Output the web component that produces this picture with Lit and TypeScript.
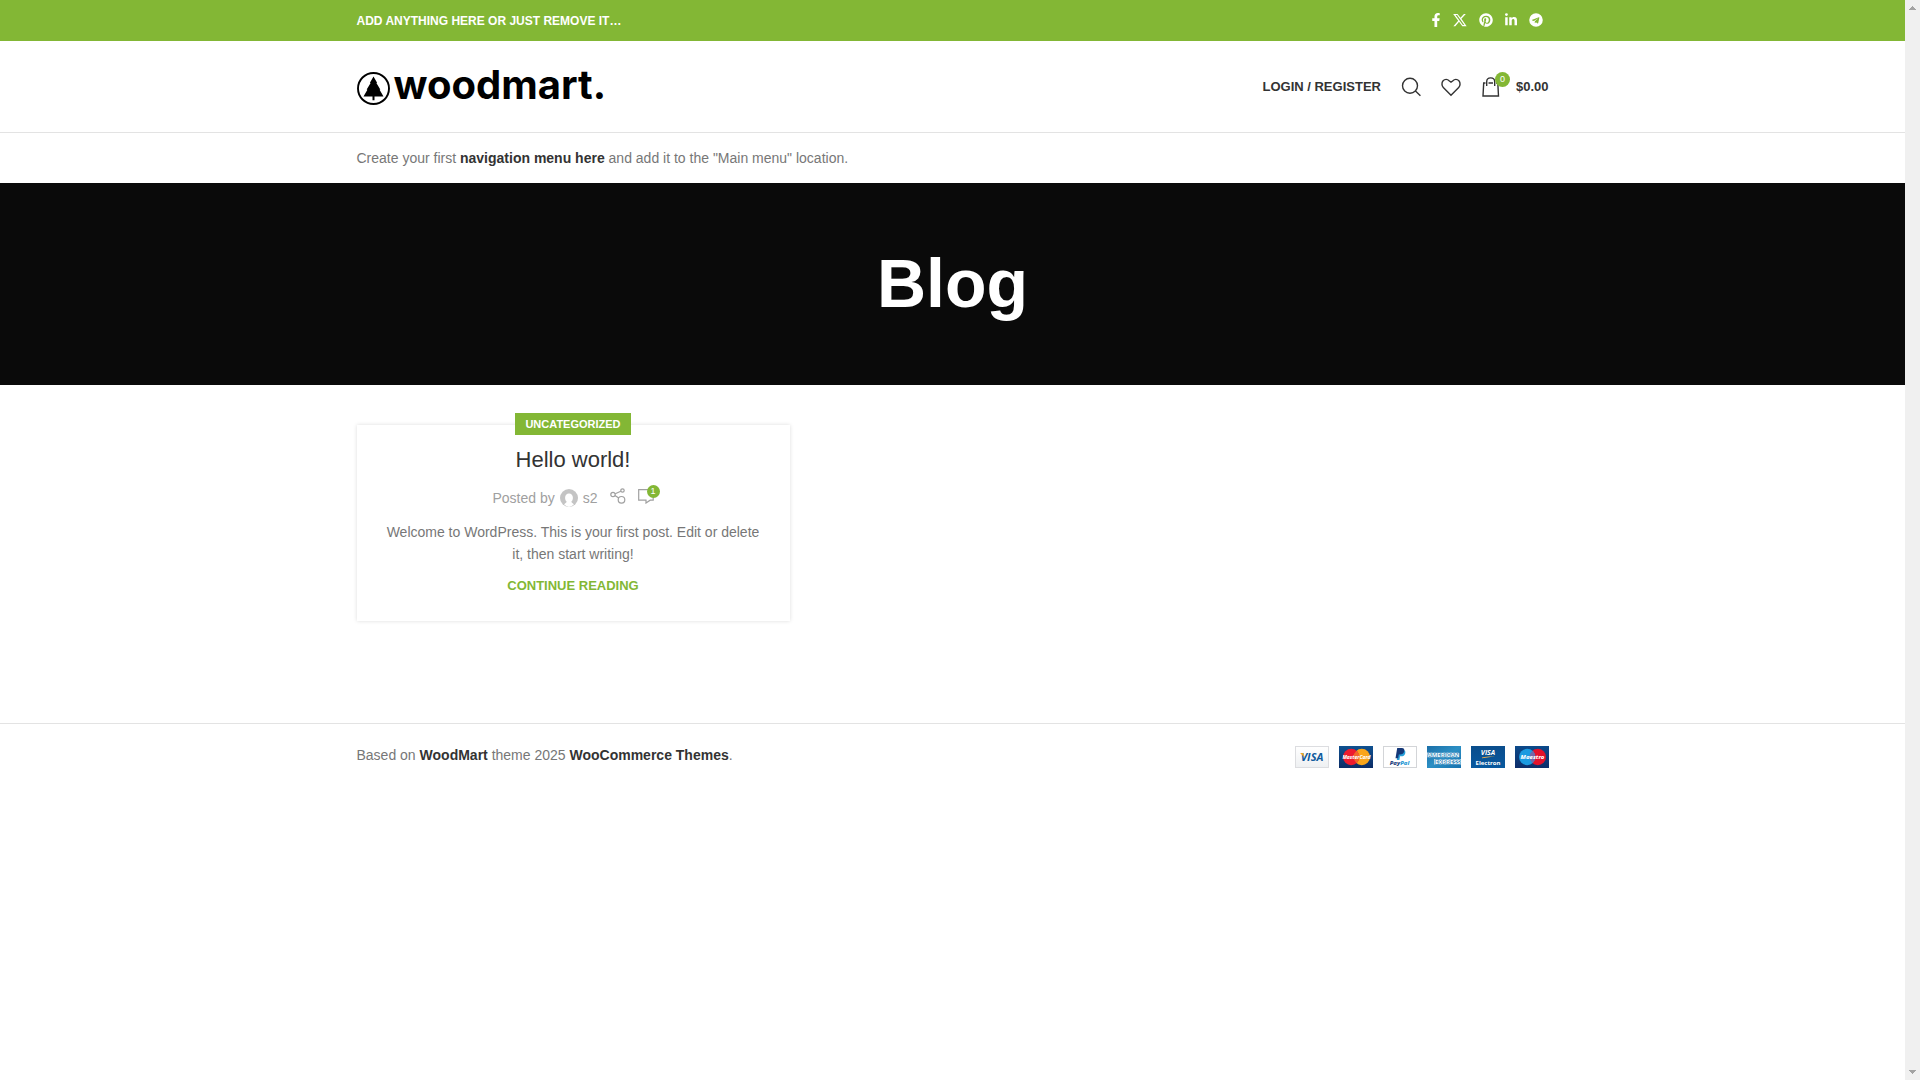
import { LitElement, html, svg, css } from "lit";
import { customElement } from "lit/decorators.js";

const icons = {
  facebook: svg`<svg width="10" height="14" viewBox="0 0 320 512" aria-hidden="true"><path d="M279 288l14-93h-89v-60c0-25 12-50 52-50h41V7s-37-7-72-7c-73 0-121 44-121 125v70H23v93h81v224h100V288z"/></svg>`,
  x: svg`<svg width="14" height="14" viewBox="0 0 24 24" aria-hidden="true"><path d="M.3 1.500h7.600l4.900 6.500 5.900-6.500h3.300l-7.600 8.500 9 12.500h-7.500l-5.500-7.300-6.400 7.300H.6l8.300-9.300zM4.300 3.400l12.500 17.200h2.600L7 3.400z"/></svg>`,
  pinterest: svg`<svg width="14" height="14" viewBox="0 0 496 512" aria-hidden="true"><path d="M496 256c0 137-111 248-248 248-25.600 0-50.200-3.900-73.400-11.100 10.100-16.500 25.200-43.500 30.800-65 3-11.600 15.400-59 15.400-59 8.100 15.400 31.700 28.500 56.800 28.500 74.800 0 128.700-68.800 128.700-154.300 0-81.900-66.900-143.200-152.900-143.200-107 0-163.900 71.800-163.900 150.100 0 36.400 19.400 81.700 50.300 96.100 4.700 2.200 7.200 1.200 8.300-3.300.8-3.400 5-20.300 6.900-28.100.6-2.500.3-4.700-1.700-7.100-10.100-12.500-18.300-35.300-18.300-56.600 0-54.700 41.400-107.600 112-107.600 60.900 0 103.600 41.500 103.600 100.900 0 67.100-33.900 113.600-78 113.600-24.300 0-42.600-20.100-36.700-44.800 7-29.500 20.500-61.300 20.500-82.600 0-19-10.200-34.900-31.400-34.900-24.900 0-44.900 25.700-44.900 60.200 0 22 7.400 36.800 7.400 36.800s-24.500 103.800-29 123.200c-5 21.400-3 51.600-.9 71.200C65.400 450.900 0 361.100 0 256 0 119 111 8 248 8s248 111 248 248z"/></svg>`,
  linkedin: svg`<svg width="12" height="14" viewBox="0 0 448 512" aria-hidden="true"><path d="M100.300 448H7.400V148.900h92.900zM53.800 108.100C24.100 108.100 0 83.500 0 53.800a53.800 53.800 0 0 1 107.600 0c0 29.700-24.100 54.300-53.800 54.300zM447.900 448h-92.700V302.400c0-34.700-.7-79.200-48.300-79.200-48.300 0-55.700 37.700-55.700 76.700V448h-92.800V148.900h89.100v40.800h1.300c12.400-23.500 42.700-48.300 87.900-48.300 94 0 111.300 61.900 111.300 142.300V448z"/></svg>`,
  telegram: svg`<svg width="14" height="14" viewBox="0 0 496 512" aria-hidden="true"><path d="M248 8a248 248 0 1 0 0 496 248 248 0 0 0 0-496zm122 170-41 192c-3 13-11 17-22 10l-62-46-30 29c-3 3-6 6-13 6l5-63 115-104c5-5-1-7-8-3L172 289l-62-19c-13-4-13-13 3-19l240-93c11-4 21 3 17 20z"/></svg>`,
  search: svg`<svg class="line" width="20" height="20" viewBox="0 0 20 20" aria-hidden="true"><circle cx="9" cy="8.700" r="7.500"/><path d="M14.200 13.800l5.200 5"/></svg>`,
  heart: svg`<svg class="line" width="20" height="20" viewBox="0 0 20 20" aria-hidden="true"><path d="M10 18.200 2.300 10.500C.6 8.800.5 5.500 2.100 3.700c1.700-1.800 4.300-1.800 6 0L10 5.200l1.900-1.500c1.700-1.800 4.300-1.800 6 0 1.600 1.800 1.500 5.100-.2 6.800z"/></svg>`,
  bag: svg`<svg class="line" width="20" height="20" viewBox="0 0 20 20" aria-hidden="true"><path d="M4.500 6H2.700L2 19h15.500L16.800 6H15M7.500 6H12M5.700 9V4.800C5.700 2.500 7.500.9 9.700.9s4 1.600 4 3.900V9"/></svg>`,
  share: svg`<svg class="thin" width="16" height="16" viewBox="0 0 16 16" aria-hidden="true"><circle cx="3" cy="6.500" r="2.200"/><circle cx="12.500" cy="2.500" r="1.700"/><circle cx="11.500" cy="11.800" r="3.300"/><path d="M5.200 5.700l5.600-2.400M4.900 7.600l3.900 2.500"/></svg>`,
  comment: svg`<svg class="thin" width="16" height="16" viewBox="0 0 16 16" aria-hidden="true"><path d="M.7 1.700h14.500v10.500h-3L8 15v-2.800H.7z"/></svg>`,
  avatar: svg`<svg width="18" height="18" viewBox="0 0 18 18" aria-hidden="true"><circle cx="9" cy="9" r="9" fill="#c4c4c4"/><path d="M9 4.500c2.400 0 3.900 1.700 3.900 4.200 0 1.900-.7 3.200-1.600 4 .4 1.100 1.700 1.600 2.700 2.600A9 9 0 0 1 9 18a9 9 0 0 1-5-2.700c1-1 2.300-1.500 2.700-2.600-.9-.8-1.600-2.100-1.600-4 0-2.500 1.500-4.200 3.900-4.200z" fill="#fff"/></svg>`,
  tree: svg`<svg width="33" height="33" viewBox="0 0 33 33" aria-hidden="true"><circle cx="16.500" cy="16.500" r="15.500" fill="none" stroke="#000" stroke-width="1.900"/><path d="M16.500 4.500l3.600 6.300-.7.200 3.900 6.500-.7.300 3.900 6.700h-9v3.700h-2v-3.700h-9l3.900-6.700-.7-.3 3.900-6.500-.7-.2z"/></svg>`,
};

const socials = [
  ["Facebook", icons.facebook],
  ["X", icons.x],
  ["Pinterest", icons.pinterest],
  ["LinkedIn", icons.linkedin],
  ["Telegram", icons.telegram],
] as const;

@customElement("payment-marks")
export class PaymentMarks extends LitElement {
  static styles = css`
    :host { display: flex; gap: 10px; padding-top: 2px; }
    svg { display: block; }
    text { font-family: "Open Sans", sans-serif; font-weight: 700; text-anchor: middle; }
    .slant { font-style: italic; }
    .round { font-family: "Noto Sans", sans-serif; font-weight: 800; font-style: italic; }
  `;

  render() {
    return html`
      <svg width="34" height="22" viewBox="0 0 34 22" role="img" aria-label="Visa">
        <defs><linearGradient id="v" x2="0" y2="1"><stop stop-color="#fff"/><stop offset="1" stop-color="#eef0f2"/></linearGradient></defs>
        <rect x=".5" y=".5" width="33" height="21" fill="url(#v)" stroke="#dcdde0"/>
        <text class="slant" x="17" y="15" font-size="11" fill="#0e5a9d">VISA</text>
        <path d="M5 7h3.200l1.500 4.500z" fill="#f0a623"/>
      </svg>
      <svg width="34" height="22" viewBox="0 0 34 22" role="img" aria-label="MasterCard">
        <defs><linearGradient id="m" x2="0" y2="1"><stop stop-color="#0f5190"/><stop offset="1" stop-color="#0b2c66"/></linearGradient></defs>
        <rect width="34" height="22" fill="url(#m)"/>
        <circle cx="22.800" cy="11" r="8.200" fill="#f9a51a"/>
        <circle cx="12.200" cy="11" r="8.200" fill="#ed1b2e"/>
        <path d="M17.500 4.800a8.200 8.200 0 0 1 0 12.400 8.200 8.200 0 0 1 0-12.400z" fill="#f2662a"/>
        <text class="round" x="17.500" y="13.200" font-size="5" fill="#fff">MasterCard</text>
      </svg>
      <svg width="34" height="22" viewBox="0 0 34 22" role="img" aria-label="PayPal">
        <rect x=".5" y=".5" width="33" height="21" fill="#fff" stroke="#d3d5d8"/>
        <path d="M15.500 4h4.500c2.300 0 2.700 1.800 2.200 3.500-.5 2-2 2.800-4 2.800h-1.200l-.6 3.700h-2.600z" fill="#27a0da"/>
        <path d="M14.200 2h4.600c2.300 0 2.900 1.600 2.400 3.400-.5 2.100-2 3-4.100 3h-1.300l-.6 3.800h-2.700z" fill="#153878"/>
        <text class="round" x="16.500" y="19.200" font-size="6" fill="#153878">Pay<tspan fill="#2196d3">Pal</tspan></text>
      </svg>
      <svg width="34" height="22" viewBox="0 0 34 22" role="img" aria-label="American Express">
        <defs><linearGradient id="a" x2="1" y2="1"><stop stop-color="#1b6fa8"/><stop offset=".5" stop-color="#2c8fc4"/><stop offset="1" stop-color="#1671ae"/></linearGradient></defs>
        <rect width="34" height="22" fill="url(#a)"/>
        <path d="M0 6.500h32v5H0zM7 13h27v5.500H7z" fill="#fff" opacity=".65"/>
        <text x="16.500" y="11" font-size="6" fill="#fff" stroke="#1f7cb5" stroke-width="1" paint-order="stroke">AMERICAN</text>
        <text x="20.500" y="18" font-size="6" fill="#fff" stroke="#1f7cb5" stroke-width="1" paint-order="stroke">EXPRESS</text>
      </svg>
      <svg width="34" height="22" viewBox="0 0 34 22" role="img" aria-label="Visa Electron">
        <defs><linearGradient id="e" x2="0" y2="1"><stop stop-color="#0a4d8c"/><stop offset="1" stop-color="#08599f"/></linearGradient></defs>
        <rect width="34" height="22" fill="url(#e)"/>
        <text class="slant" x="17" y="9" font-size="7" fill="#fff">VISA</text>
        <path d="M11 11.500c5-1 9-1.200 13-.8-4 0-8 .5-13 1.600z" fill="#f3b04a"/>
        <text x="17" y="19" font-size="6" fill="#fff">Electron</text>
      </svg>
      <svg width="34" height="22" viewBox="0 0 34 22" role="img" aria-label="Maestro">
        <defs><linearGradient id="s" x2="0" y2="1"><stop stop-color="#0c4a8a"/><stop offset="1" stop-color="#0d2d69"/></linearGradient></defs>
        <rect width="34" height="22" fill="url(#s)"/>
        <circle cx="22.800" cy="11" r="8.200" fill="#e2122b"/>
        <circle cx="12.200" cy="11" r="8.200" fill="#1a9ae0"/>
        <path d="M17.500 4.800a8.200 8.200 0 0 1 0 12.400 8.200 8.200 0 0 1 0-12.400z" fill="#7467a6"/>
        <text class="round" x="17.500" y="13.200" font-size="6" fill="#fff">Maestro</text>
      </svg>
    `;
  }
}

@customElement("app-root")
export class AppRoot extends LitElement {
  static styles = css`
    :host {
      display: grid;
      grid-template-columns: minmax(0, 1fr) 15px;
      min-height: 100vh;
      background: #fff;
      color: #777;
      font: 14px/22px "Liberation Sans", Arial, sans-serif;
      --green: #83b735;
      --dark: #333;
    }
    * { box-sizing: border-box; }
    a { color: inherit; text-decoration: none; }
    svg { display: block; fill: currentColor; flex: none; }
    .line { fill: none; stroke: currentColor; stroke-width: 1.400; }
    .thin { fill: none; stroke: currentColor; stroke-width: 1.200; }
    h1, h2, p { margin: 0; }
    .wrap {
      display: flex;
      align-items: center;
      justify-content: space-between;
      max-width: 1222px;
      margin: 0 auto;
      padding: 0 15px;
    }
    .topbar { background: var(--green); color: #fff; font-size: 12px; font-weight: 700; }
    .topbar .wrap { min-height: 41px; }
    .socials { display: flex; gap: 12px; padding: 0 6px 2px 0; }
    .brandbar { border-bottom: 1px solid #e3e3e3; }
    .brandbar .wrap { min-height: 91px; }
    .logo { display: flex; align-items: center; gap: 4px; color: #000; }
    .logo svg { margin-top: 4px; }
    .wordmark { padding-bottom: 4px; font: 700 40px/48px Inter, sans-serif; }
    .tools { display: flex; align-items: center; gap: 20px; color: var(--dark); font-size: 13px; font-weight: 700; }
    .cart { display: flex; align-items: center; gap: 15px; }
    .counted { position: relative; }
    .badge {
      position: absolute;
      top: -5px;
      right: -9px;
      width: 15px;
      border-radius: 50%;
      background: var(--green);
      color: #fff;
      font-size: 9px;
      font-weight: 400;
      line-height: 15px;
      text-align: center;
    }
    .menu .wrap { min-height: 50px; }
    .strong { color: var(--dark); font-weight: 700; }
    .title { padding: 60px 15px 62px; background: #0a0a0a; color: #fff; text-align: center; }
    .title h1 { font-size: 68px; line-height: 80px; }
    .posts { padding-top: 40px; padding-bottom: 102px; }
    .card {
      display: flex;
      flex-direction: column;
      align-items: center;
      width: 100%;
      max-width: 433px;
      padding: 0 25px 24px;
      box-shadow: 0 0 4px rgba(0, 0, 0, 0.14);
      text-align: center;
    }
    .category {
      margin-top: -12px;
      padding: 0 10px;
      background: var(--green);
      color: #fff;
      font-size: 11px;
      font-weight: 700;
    }
    .card h2 { margin-top: 10px; color: var(--dark); font-size: 22px; font-weight: 400; line-height: 30px; }
    .meta { display: flex; align-items: center; gap: 12px; margin-top: 12px; color: #a0a0a0; }
    .author { display: flex; align-items: center; gap: 5px; }
    .meta .badge { top: -3px; right: -6px; width: 13px; line-height: 13px; }
    .share, .reply { margin-bottom: 4px; }
    .excerpt { margin-top: 12px; }
    .more { margin-top: 10px; color: var(--green); font-size: 13px; font-weight: 700; }
    footer { border-top: 1px solid #e3e3e3; }
    footer .wrap { align-items: flex-start; padding-top: 20px; padding-bottom: 20px; }
    .rail {
      display: flex;
      flex-direction: column;
      align-items: center;
      justify-content: space-between;
      padding: 6px 0;
      background: #f0f0f0;
      color: #a3a3a3;
    }
  `;

  render() {
    return html`
      <div class="page">
        <header>
          <div class="topbar">
            <div class="wrap">
              <span>ADD ANYTHING HERE OR JUST REMOVE IT…</span>
              <nav class="socials" aria-label="Social links">
                ${socials.map(([name, icon]) => html`<a href="#" aria-label=${name}>${icon}</a>`)}
              </nav>
            </div>
          </div>
          <div class="brandbar">
            <div class="wrap">
              <a class="logo" href="#">${icons.tree}<span class="wordmark">woodmart.</span></a>
              <div class="tools">
                <a href="#">LOGIN / REGISTER</a>
                <a href="#" aria-label="Search">${icons.search}</a>
                <a href="#" aria-label="Wishlist">${icons.heart}</a>
                <a class="cart" href="#">
                  <span class="counted">${icons.bag}<span class="badge">0</span></span>
                  <span>$0.00</span>
                </a>
              </div>
            </div>
          </div>
          <nav class="menu" aria-label="Main menu">
            <div class="wrap">
              <span>Create your first <a class="strong" href="#">navigation menu here</a> and add it to the "Main menu" location.</span>
            </div>
          </nav>
        </header>
        <section class="title"><h1>Blog</h1></section>
        <main class="wrap posts">
          <article class="card">
            <a class="category" href="#">UNCATEGORIZED</a>
            <h2><a href="#">Hello world!</a></h2>
            <div class="meta">
              <span class="author">Posted by ${icons.avatar}<a href="#">s2</a></span>
              <a class="share" href="#" aria-label="Share">${icons.share}</a>
              <a class="counted reply" href="#" aria-label="Comments">${icons.comment}<span class="badge">1</span></a>
            </div>
            <p class="excerpt">Welcome to WordPress. This is your first post. Edit or delete it, then start writing!</p>
            <a class="more" href="#">CONTINUE READING</a>
          </article>
        </main>
        <footer>
          <div class="wrap">
            <span>Based on <a class="strong" href="#">WoodMart</a> theme 2025 <a class="strong" href="#">WooCommerce Themes</a>.</span>
            <payment-marks></payment-marks>
          </div>
        </footer>
      </div>
      <div class="rail" aria-hidden="true">
        <svg width="7" height="4" viewBox="0 0 7 4"><path d="M3 0h1v1h1v1h1v1h1v1H0V3h1V2h1V1h1z"/></svg>
        <svg width="7" height="4" viewBox="0 0 7 4"><path d="M0 0h7v1H6v1H5v1H4v1H3V3H2V2H1V1H0z"/></svg>
      </div>
    `;
  }
}
